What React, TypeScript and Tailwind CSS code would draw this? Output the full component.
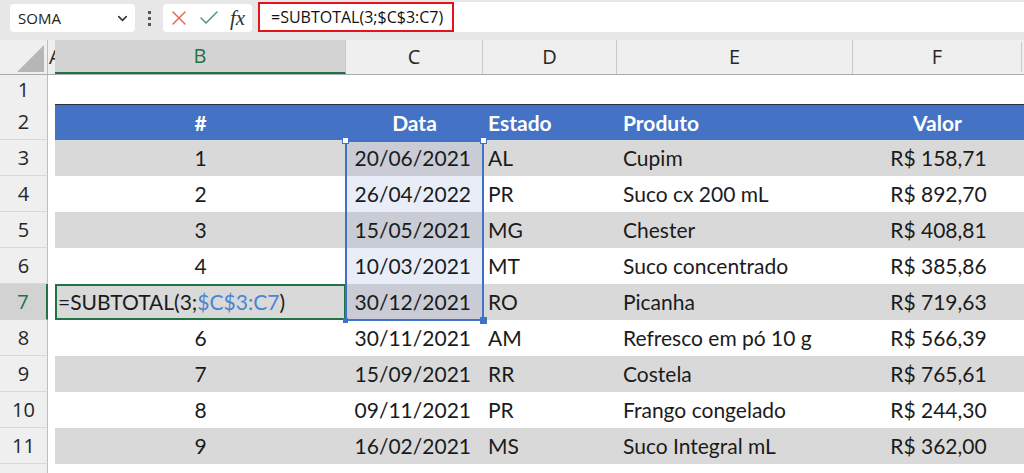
import { ChevronDown, X, Check } from 'lucide-react'

const COLS = 'grid grid-cols-[48px_7px_291px_137px_134px_236px_1fr]'

const rows = [
  { n: 3, id: '1', date: '20/06/2021', uf: 'AL', prod: 'Cupim', val: 'R$ 158,71' },
  { n: 4, id: '2', date: '26/04/2022', uf: 'PR', prod: 'Suco cx 200 mL', val: 'R$ 892,70' },
  { n: 5, id: '3', date: '15/05/2021', uf: 'MG', prod: 'Chester', val: 'R$ 408,81' },
  { n: 6, id: '4', date: '10/03/2021', uf: 'MT', prod: 'Suco concentrado', val: 'R$ 385,86' },
  { n: 7, id: '5', date: '30/12/2021', uf: 'RO', prod: 'Picanha', val: 'R$ 719,63' },
  { n: 8, id: '6', date: '30/11/2021', uf: 'AM', prod: 'Refresco em pó 10 g', val: 'R$ 566,39' },
  { n: 9, id: '7', date: '15/09/2021', uf: 'RR', prod: 'Costela', val: 'R$ 765,61' },
  { n: 10, id: '8', date: '09/11/2021', uf: 'PR', prod: 'Frango congelado', val: 'R$ 244,30' },
  { n: 11, id: '9', date: '16/02/2021', uf: 'MS', prod: 'Suco Integral mL', val: 'R$ 362,00' },
]

function RowHead({ n, active }: { n?: number; active?: boolean }) {
  return (
    <div
      className={
        active
          ? 'flex items-center justify-center bg-[#d2d2d2] text-[#217346] border-r-2 border-[#217346] border-b border-b-[#d4d4d4] font-[\'Open_Sans\',sans-serif] text-[20px]'
          : 'flex items-center justify-center bg-[#efefef] text-[#262626] border-r border-[#bdbdbd] border-b border-b-[#d8d8d8] font-[\'Open_Sans\',sans-serif] text-[20px]'
      }
    >
      {n}
    </div>
  )
}

export default function App() {
  return (
    <div className="w-[1024px] h-[473px] overflow-hidden bg-white select-none">
      {/* formula toolbar */}
      <div className="h-[40px] bg-[#e7e7e7] flex items-start pt-[4px] pl-[10px] font-['Open_Sans',sans-serif]">
        <div className="w-[125px] h-[28px] bg-white rounded-[4px] flex items-center justify-between pl-[8px] pr-[5px] text-[15px] text-[#222]">
          <span>SOMA</span>
          <ChevronDown size={15} strokeWidth={2.5} className="text-[#333]" />
        </div>
        <div className="w-[28px] h-[28px] flex flex-col items-center justify-center gap-[3px]">
          <span className="w-[3px] h-[3px] bg-[#555]" />
          <span className="w-[3px] h-[3px] bg-[#555]" />
          <span className="w-[3px] h-[3px] bg-[#555]" />
        </div>
        <div className="w-[89px] h-[28px] bg-white rounded-[4px] flex items-center pl-[4px] gap-[6px]">
          <X size={24} strokeWidth={1.4} className="text-[#e5664f]" />
          <Check size={24} strokeWidth={1.4} className="text-[#3f9467]" />
          <span className="font-['Liberation_Serif',serif] italic text-[21px] text-[#333] leading-none ml-[3px]">fx</span>
        </div>
        <div className="ml-[6px] -mt-[2px] flex-1 h-[30px] bg-white flex items-stretch">
          <div className="w-[196px] border-2 border-[#e3121b] flex items-center pl-[11px] text-[16px] text-[#111]">
            =SUBTOTAL(3;$C$3:C7)
          </div>
        </div>
      </div>

      {/* column headers */}
      <div className={`${COLS} h-[35px] bg-[#efefef] border-b border-[#ababab] font-['Open_Sans',sans-serif] text-[20px] text-[#262626]`}>
        <div className="relative border-r border-[#bdbdbd]">
          <svg className="absolute left-[17px] top-[5px]" width="27" height="27" viewBox="0 0 27 27">
            <polygon points="27,0 27,27 0,27" fill="#b6b6b6" />
          </svg>
        </div>
        <div className="overflow-hidden flex items-center pl-[1px] text-[20px] leading-none">A</div>
        <div className="flex items-center justify-center bg-[#d3d3d3] text-[#217346] border-b-2 border-[#217346] border-r border-r-[#c8c8c8]">B</div>
        <div className="flex items-center justify-center border-r border-[#c8c8c8]">C</div>
        <div className="flex items-center justify-center border-r border-[#c8c8c8]">D</div>
        <div className="flex items-center justify-center border-r border-[#c8c8c8]">E</div>
        <div className="flex items-center justify-center">
          <span className="w-[169px] text-center border-r border-[#c8c8c8] mr-auto">F</span>
        </div>
      </div>

      {/* sheet body */}
      <div className="relative font-[Lato,sans-serif] text-[21px] text-[#1b1b1b]">
        <div className={`${COLS} h-[29px]`}>
          <RowHead n={1} />
          <div />
          <div className="col-span-5" />
        </div>

        <div className={`${COLS} h-[36px]`}>
          <RowHead n={2} />
          <div />
          <div className="col-span-5 grid grid-cols-[291px_137px_134px_236px_1fr] bg-[#4472c4] border-t border-[#2a2f3d] text-white font-bold">
            <div className="flex items-center justify-center">#</div>
            <div className="flex items-center justify-center">Data</div>
            <div className="flex items-center pl-[5px]">Estado</div>
            <div className="flex items-center pl-[6px]">Produto</div>
            <div className="flex items-center justify-center pr-[2px]">Valor</div>
          </div>
        </div>

        {rows.map((r) => {
          const band = r.n % 2 === 1
          const inSel = r.n >= 3 && r.n <= 7
          const active = r.n === 7
          const cellBg = band ? 'bg-[#d9d9d9]' : 'bg-white'
          const selBg = band ? 'bg-[#c9ccd4]' : 'bg-[#e9edf8]'
          return (
            <div key={r.n} className={`${COLS} h-[36px]`}>
              <RowHead n={r.n} active={active} />
              <div />
              <div className={`relative flex items-center ${cellBg} ${active ? 'justify-start pl-[3px]' : 'justify-center'}`}>
                {active ? (
                  <>
                    <span>
                      =SUBTOTAL(3;<span className="text-[#4a84d2]">$C$3:C7</span>)
                    </span>
                    <div className="absolute inset-0 border-2 border-[#217346]" />
                  </>
                ) : (
                  r.id
                )}
              </div>
              <div className={`flex items-center justify-end pr-[12px] ${inSel ? selBg : cellBg}`}>{r.date}</div>
              <div className={`flex items-center pl-[5px] ${cellBg}`}>{r.uf}</div>
              <div className={`flex items-center pl-[6px] ${cellBg}`}>{r.prod}</div>
              <div className={`flex items-center ${cellBg}`}>
                <span className="w-[171px] text-center">{r.val}</span>
              </div>
            </div>
          )
        })}

        {/* row 12, only its top edge is in view */}
        <div className={`${COLS} h-[36px]`}>
          <RowHead />
          <div />
          <div className="col-span-5" />
        </div>

        {/* range reference C3:C7 */}
        <div className="absolute left-[345px] top-[65px] w-[139px] h-[181px] border-2 border-[#3f72c6]">
          <span className="absolute -left-[5px] -top-[5px] w-[7px] h-[7px] bg-white border border-[#3f72c6]" />
          <span className="absolute -right-[5px] -top-[5px] w-[7px] h-[7px] bg-white border border-[#3f72c6]" />
          <span className="absolute -left-[4px] -bottom-[4px] w-[5px] h-[5px] bg-[#3f72c6]" />
          <span className="absolute -right-[5px] -bottom-[5px] w-[7px] h-[7px] bg-[#3f72c6]" />
        </div>
      </div>
    </div>
  )
}
